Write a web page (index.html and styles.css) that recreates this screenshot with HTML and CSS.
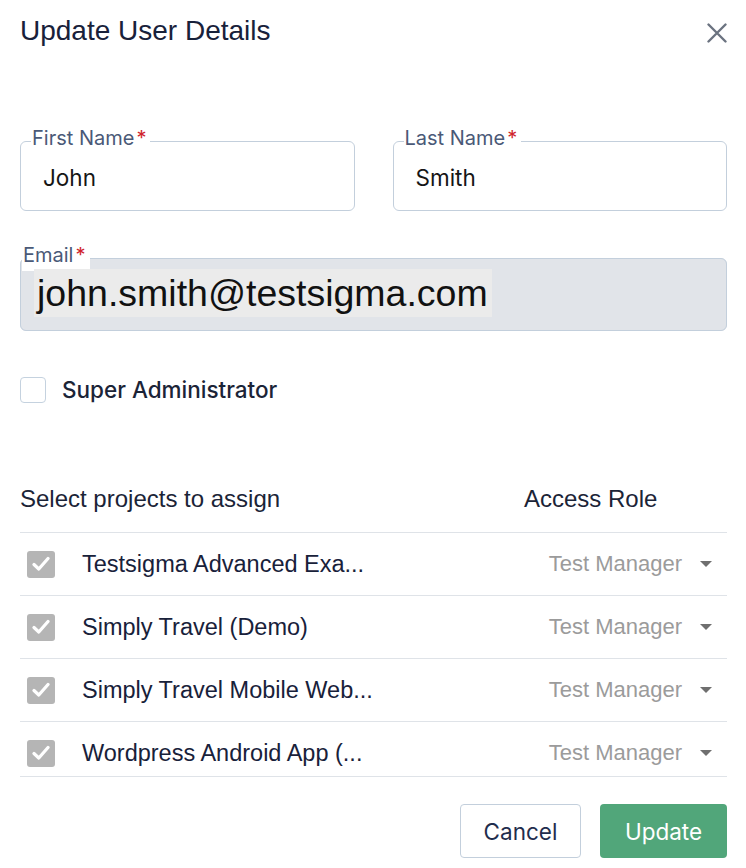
FILE: index.html
```html
<!DOCTYPE html>
<html lang="en">

<head>
  <meta charset="UTF-8">
  <meta name="viewport" content="width=device-width, initial-scale=1.0">
  <title>Update User Details</title>
  <link rel="stylesheet" href="styles.css">
</head>

<body>
  <div class="modal">
    <header class="modal-header">
      <h1 class="modal-title">Update User Details</h1>
      <button class="close-btn" aria-label="Close">
        <svg width="20" height="20" viewBox="0 0 20 20">
          <path d="M1.5 1.5 L18.5 18.5 M18.5 1.5 L1.5 18.5" stroke="#6b7380" stroke-width="2.4" stroke-linecap="round" />
        </svg>
      </button>
    </header>

    <div class="name-row">
      <fieldset class="field">
        <legend>First Name<span class="req">*</span></legend>
        <div class="field-value">John</div>
      </fieldset>
      <fieldset class="field">
        <legend>Last Name<span class="req">*</span></legend>
        <div class="field-value">Smith</div>
      </fieldset>
    </div>

    <fieldset class="field field-disabled">
      <legend>Email<span class="req">*</span></legend>
      <div class="field-value email-value"><span class="email-text">john.smith@testsigma.com</span></div>
    </fieldset>

    <label class="admin-check">
      <span class="box"></span>
      <span>Super Administrator</span>
    </label>

    <div class="projects-head">
      <span>Select projects to assign</span>
      <span class="role-head">Access Role</span>
    </div>

    <div class="project-list">
      <div class="project-row">
        <span class="checked"><svg width="18" height="16" viewBox="0 0 18 16"><path d="M2 8.5 L6.8 13 L16 2.5" fill="none" stroke="#fff" stroke-width="3.2" stroke-linecap="round" stroke-linejoin="round" /></svg></span>
        <span class="project-name">Testsigma Advanced Exa...</span>
        <span class="role">Test Manager <i class="caret"></i></span>
      </div>
      <div class="project-row">
        <span class="checked"><svg width="18" height="16" viewBox="0 0 18 16"><path d="M2 8.5 L6.8 13 L16 2.5" fill="none" stroke="#fff" stroke-width="3.2" stroke-linecap="round" stroke-linejoin="round" /></svg></span>
        <span class="project-name">Simply Travel (Demo)</span>
        <span class="role">Test Manager <i class="caret"></i></span>
      </div>
      <div class="project-row">
        <span class="checked"><svg width="18" height="16" viewBox="0 0 18 16"><path d="M2 8.5 L6.8 13 L16 2.5" fill="none" stroke="#fff" stroke-width="3.2" stroke-linecap="round" stroke-linejoin="round" /></svg></span>
        <span class="project-name">Simply Travel Mobile Web...</span>
        <span class="role">Test Manager <i class="caret"></i></span>
      </div>
      <div class="project-row">
        <span class="checked"><svg width="18" height="16" viewBox="0 0 18 16"><path d="M2 8.5 L6.8 13 L16 2.5" fill="none" stroke="#fff" stroke-width="3.2" stroke-linecap="round" stroke-linejoin="round" /></svg></span>
        <span class="project-name">Wordpress Android App (...</span>
        <span class="role">Test Manager <i class="caret"></i></span>
      </div>
    </div>

    <div class="actions">
      <button class="btn btn-cancel">Cancel</button>
      <button class="btn btn-update">Update</button>
    </div>
  </div>
</body>

</html>
```

FILE: styles.css
```css
body {
  margin: 0;
  padding: 0;
  background-color: #ffffff;
  font-family: Inter, "Liberation Sans", sans-serif;
  color: #1b2437;
}

.modal {
  padding: 15px 19px 0 20px;
}

.modal-header {
  display: flex;
  align-items: center;
  justify-content: space-between;
  height: 32px;
}

.modal-title {
  margin: 0;
  font-family: "Liberation Sans", Arial, sans-serif;
  font-size: 28px;
  line-height: 32px;
  font-weight: normal;
  color: #18213a;
}

.close-btn {
  background: none;
  border: none;
  padding: 0;
  margin-top: 3px;
  display: flex;
  cursor: pointer;
}

.name-row {
  display: grid;
  grid-template-columns: 1fr 1fr;
  gap: 38px;
  margin-top: 81px;
}

.field {
  margin: 0;
  padding: 0 22px 10px;
  border: 1.5px solid #c3cfdc;
  border-radius: 6px;
  min-width: 0;
}

.field legend {
  margin-left: -12px;
  padding: 0 4px 6px 1px;
  font-size: 20px;
  line-height: 20px;
  color: #4a5977;
  background-color: #ffffff;
}

.req {
  color: #d0242b;
  margin-left: 2px;
}

.field-value {
  height: 46px;
  display: flex;
  align-items: center;
  font-size: 22.5px;
  color: #161616;
}

.field-disabled {
  margin-top: 34px;
  padding-left: 13px;
  padding-bottom: 10px;
  background-color: #e1e4e9;
}

.email-value {
  height: 49px;
  align-items: flex-start;
}

.email-text {
  margin-top: -2px;
  font-family: "Liberation Sans", Arial, sans-serif;
  font-size: 37.5px;
  line-height: 48px;
  padding: 0 4px 0 3px;
  background-color: #ebebeb;
  color: #111111;
}

.admin-check {
  display: flex;
  align-items: center;
  gap: 16px;
  margin-top: 45px;
  font-size: 22.5px;
  font-weight: 500;
  color: #1b2437;
}

.admin-check .box {
  width: 24px;
  height: 24px;
  border: 1.5px solid #c5d2df;
  border-radius: 4px;
}

.projects-head {
  display: flex;
  align-items: center;
  margin-top: 82px;
  padding-bottom: 19px;
  border-bottom: 1.5px solid #dfe3e8;
  font-family: "Liberation Sans", Arial, sans-serif;
  font-size: 24px;
  line-height: 28px;
}

.projects-head span:first-child {
  flex: 1;
}

.role-head {
  width: 203px;
}

.project-list {
  height: 243px;
  overflow: hidden;
  border-bottom: 1.5px solid #dfe3e8;
}

.project-row {
  display: flex;
  align-items: center;
  height: 62px;
  border-bottom: 1.5px solid #dfe3e8;
  padding: 0 15px 0 7px;
  font-family: "Liberation Sans", Arial, sans-serif;
  font-size: 23.5px;
}

.checked {
  width: 28px;
  height: 27px;
  border-radius: 3px;
  background-color: #b5b5b5;
  display: flex;
  align-items: center;
  justify-content: center;
}

.project-name {
  flex: 1;
  margin-left: 27px;
  color: #18213a;
}

.role {
  display: flex;
  align-items: center;
  gap: 18px;
  font-size: 22px;
  color: #9b9b9b;
}

.caret {
  width: 0;
  height: 0;
  border-left: 6px solid transparent;
  border-right: 6px solid transparent;
  border-top: 6px solid #6f6f6f;
}

.actions {
  display: flex;
  justify-content: flex-end;
  gap: 19px;
  margin-top: 27px;
}

.btn {
  height: 54px;
  font-family: Inter, "Liberation Sans", sans-serif;
  font-size: 22.5px;
  border-radius: 4px;
  cursor: pointer;
}

.btn-cancel {
  width: 121px;
  background-color: #ffffff;
  border: 1.5px solid #c3cfdc;
  color: #1f2d4d;
}

.btn-update {
  width: 127px;
  background-color: #51a67a;
  border: none;
  color: #ffffff;
}
```
